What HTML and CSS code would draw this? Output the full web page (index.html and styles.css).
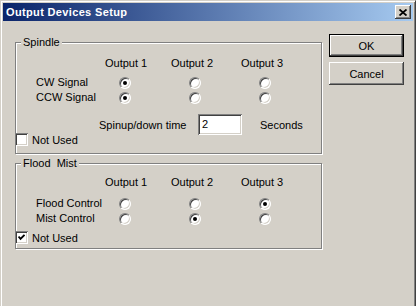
FILE: index.html
```html
<!DOCTYPE html>
<html lang="en">
<head>
  <meta charset="UTF-8">
  <title>Output Devices Setup</title>
  <link rel="stylesheet" href="styles.css">
</head>
<body>
  <div class="window">
    <div class="titlebar">
      <span class="title">Output Devices Setup</span>
      <span class="close">
        <svg width="8" height="7" viewBox="0 0 8 7"><path d="M0.5 0.5 L7.5 6.5 M7.5 0.5 L0.5 6.5" stroke="#000" stroke-width="1.8" fill="none"/></svg>
      </span>
    </div>
    <div class="client">
      <div class="groups">
        <!-- spindle -->
        <div class="group spindle">
          <span class="group-title">Spindle</span>
          <div class="matrix matrix-spindle">
            <span></span>
            <span class="head head-1">Output 1</span>
            <span class="head">Output 2</span>
            <span class="head">Output 3</span>
            <span class="row-label">CW Signal</span>
            <span class="radio on"></span>
            <span class="radio"></span>
            <span class="radio"></span>
            <span class="row-label">CCW Signal</span>
            <span class="radio on"></span>
            <span class="radio"></span>
            <span class="radio"></span>
          </div>
          <div class="spin-row">
            <span class="spin-label">Spinup/down time</span>
            <span class="edit">2</span>
            <span class="unit">Seconds</span>
          </div>
          <div class="check-row">
            <span class="check"></span>
            <span class="check-label">Not Used</span>
          </div>
        </div>
        <!-- flood / mist -->
        <div class="group flood">
          <span class="group-title">Flood&nbsp; Mist</span>
          <div class="matrix matrix-flood">
            <span></span>
            <span class="head head-1">Output 1</span>
            <span class="head">Output 2</span>
            <span class="head">Output 3</span>
            <span class="row-label">Flood Control</span>
            <span class="radio"></span>
            <span class="radio"></span>
            <span class="radio on"></span>
            <span class="row-label">Mist Control</span>
            <span class="radio"></span>
            <span class="radio on"></span>
            <span class="radio"></span>
          </div>
          <div class="check-row check-row-flood">
            <span class="check on">
              <svg width="7" height="7" viewBox="0 0 7 7"><path d="M0.5 2.5 L2.5 4.8 L6.5 0.8" stroke="#000" stroke-width="1.9" fill="none"/></svg>
            </span>
            <span class="check-label">Not Used</span>
          </div>
        </div>
      </div>
      <div class="buttons">
        <div class="button default">OK</div>
        <div class="button">Cancel</div>
      </div>
    </div>
  </div>
</body>
</html>
```

FILE: styles.css
```css
*{margin:0;padding:0;box-sizing:border-box;}

body {
  width: 416px;
  height: 306px;
  overflow: hidden;
  background: #d4d0c8;
  font-family: "Liberation Sans", Arial, sans-serif;
  font-size: 11px;
  color: #000;
}

.window {
  height: 320px;
  padding: 2px 2px 0 2px;
  border: 1px solid;
  border-color: #d4d0c8 #404040 #404040 #d4d0c8;
  box-shadow: inset 1px 1px #fff, inset -1px -1px #808080;
  background: #d4d0c8;
}

.titlebar {
  height: 18px;
  display: flex;
  align-items: center;
  justify-content: space-between;
  padding: 0 2px 0 3px;
  background: linear-gradient(to right, #0a246a, #a6caf0);
}
.title {
  color: #fff;
  font-weight: bold;
  font-size: 11px;
  letter-spacing: 0.35px;
}
.close {
  width: 16px;
  height: 14px;
  display: flex;
  align-items: center;
  justify-content: center;
  background: #d4d0c8;
  box-shadow: inset -1px -1px #404040, inset 1px 1px #fff, inset -2px -2px #808080;
}

.client {
  display: flex;
  margin-top: 1px;
  padding-left: 12px;
}
.groups {
  width: 307px;
  padding-top: 20px;
}

/* etched group box */
.group {
  position: relative;
  border: 1px solid #808080;
  box-shadow: 1px 1px 0 #fff, inset 1px 1px 0 #fff;
}
.group.spindle { height: 112px; }
.group.flood { height: 86px; margin-top: 9px; }
.group-title {
  position: absolute;
  top: -7px;
  left: 5px;
  padding: 0 2px;
  line-height: 13px;
  background: #d4d0c8;
  white-space: nowrap;
}

.matrix {
  display: grid;
  grid-template-columns: 54px 70px 70px 70px;
  margin-left: 20px;
}
.matrix-spindle {
  margin-top: 13px;
  grid-template-rows: 19px 15px 15px;
}
.matrix-flood {
  margin-top: 11px;
  grid-template-rows: 21px 15px 15px;
}
.head {
  line-height: 15px;
  align-self: start;
  padding-left: 11px;
  white-space: nowrap;
}
.head-1 { padding-left: 15px; }
.row-label {
  line-height: 15px;
  white-space: nowrap;
}

.radio {
  width: 12px;
  height: 12px;
  justify-self: center;
  align-self: center;
  display: flex;
  align-items: center;
  justify-content: center;
  border-radius: 50%;
  background: #fff;
  border: 1px solid;
  border-color: #808080 #fff #fff #808080;
  box-shadow: inset 1px 1px #404040, inset -1px -1px #d4d0c8;
}
.radio.on::after {
  content: "";
  width: 4px;
  height: 4px;
  border-radius: 50%;
  background: #000;
}

.spin-row {
  display: flex;
  align-items: center;
  margin-top: 9px;
  padding-left: 83px;
}
.spin-label { width: 99px; }
.edit {
  width: 44px;
  height: 21px;
  line-height: 21px;
  padding-left: 4px;
  background: #fff;
  box-shadow: inset 1px 1px #808080, inset -1px -1px #fff, inset 2px 2px #404040, inset -2px -2px #d4d0c8;
}
.unit { margin-left: 18px; }

.check-row {
  display: flex;
  align-items: center;
  margin-top: -2px;
  margin-left: -1px;
}
.check-row-flood { margin-top: 5px; }
.check {
  width: 13px;
  height: 13px;
  display: flex;
  align-items: center;
  justify-content: center;
  background: #fff;
  box-shadow: inset 1px 1px #808080, inset -1px -1px #fff, inset 2px 2px #404040, inset -2px -2px #d4d0c8;
}
.check-label { margin-left: 4px; }

.buttons {
  display: flex;
  flex-direction: column;
  gap: 5px;
  margin-left: 7px;
  padding-top: 12px;
}
.button {
  width: 75px;
  height: 23px;
  display: flex;
  align-items: center;
  justify-content: center;
  box-shadow: inset -1px -1px #404040, inset 1px 1px #fff, inset -2px -2px #808080;
}
.button.default {
  border: 1px solid #000;
}
```
